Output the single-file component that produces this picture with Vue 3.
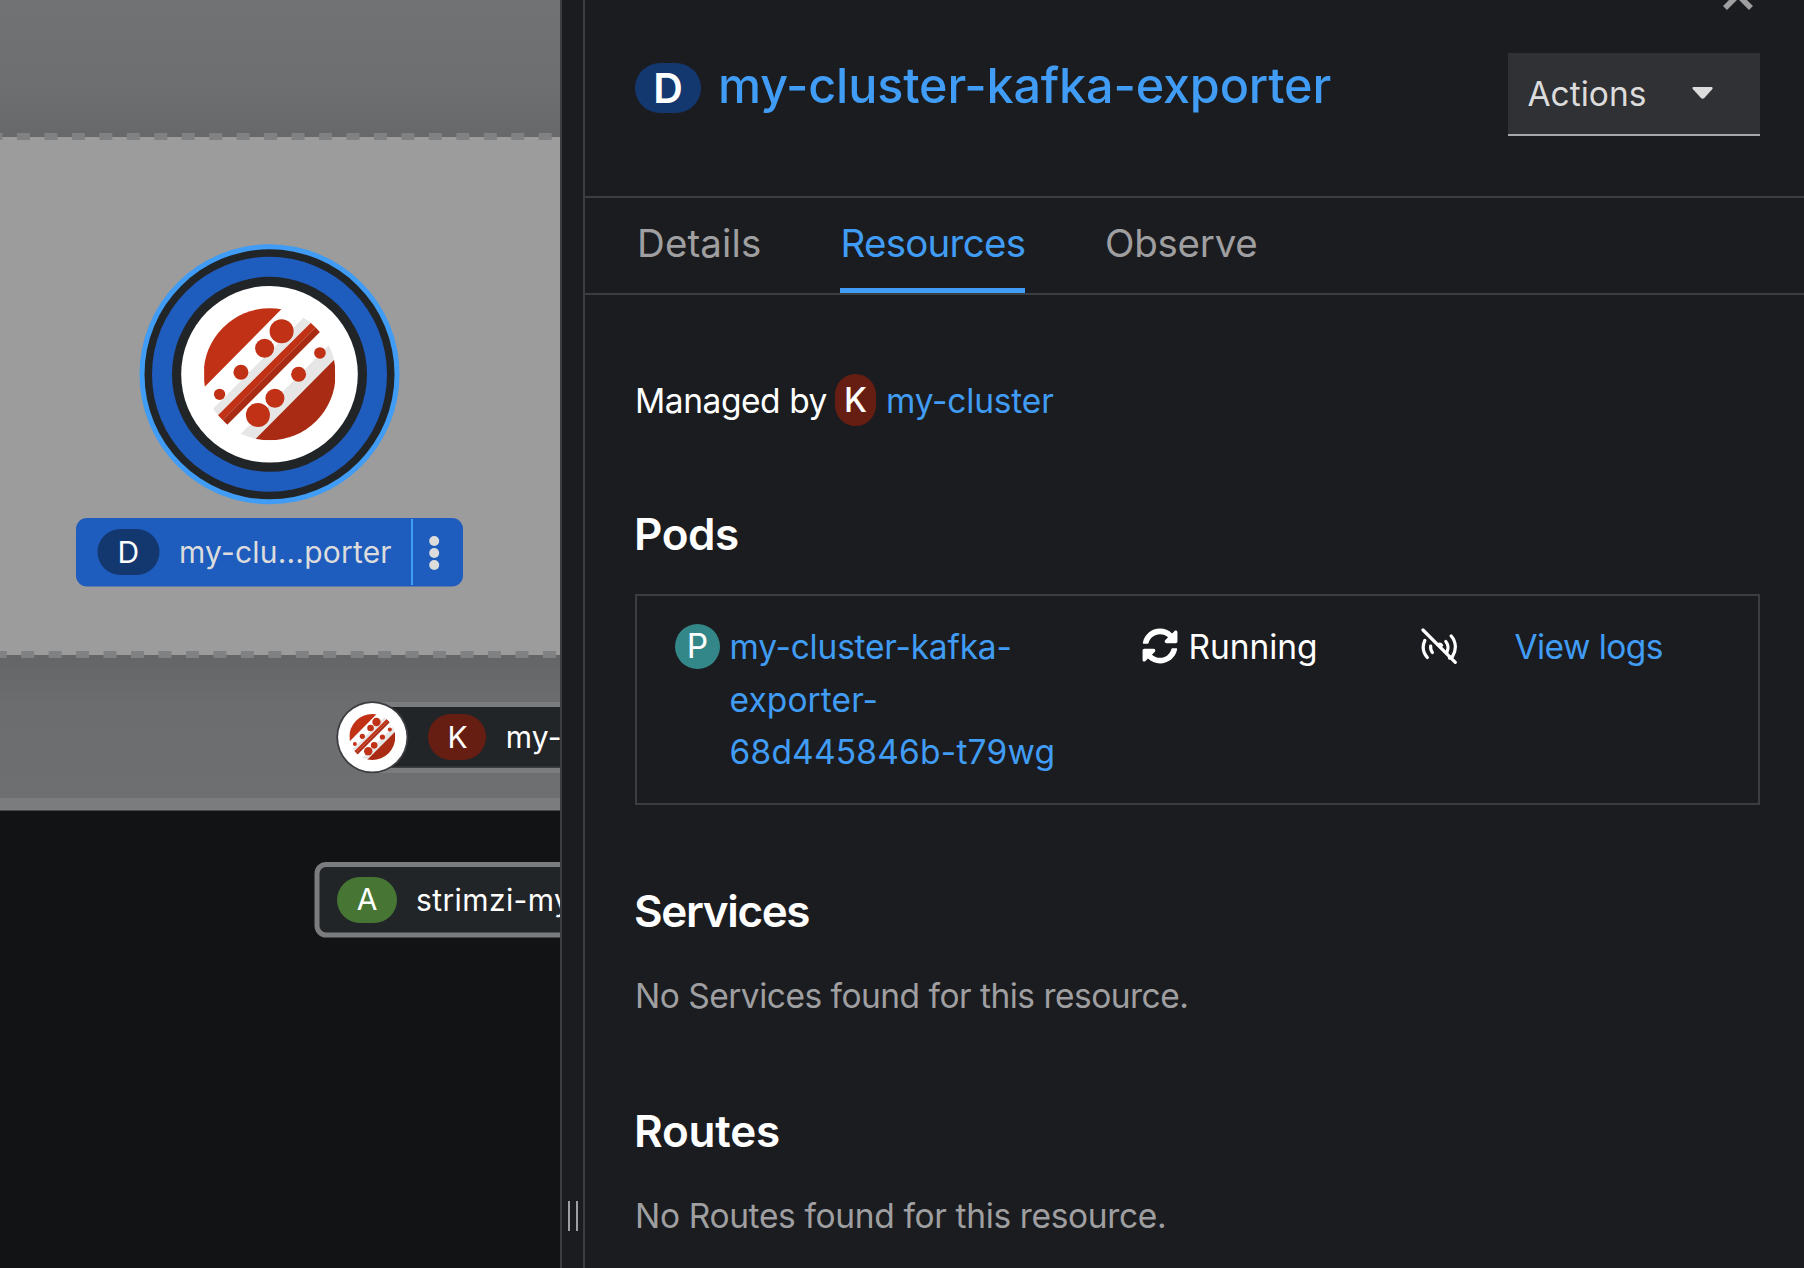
<script setup>
const tabs = [
  { label: 'Details', key: 'details' },
  { label: 'Resources', key: 'resources' },
  { label: 'Observe', key: 'observe' },
]
const active = 'resources'
</script>

<template>
  <div class="page">
    <svg class="canvas" width="560" height="1268" viewBox="0 0 560 1268">
      <defs>
        <linearGradient id="shadeTop" x1="0" y1="0" x2="0" y2="1">
          <stop offset="0" stop-color="#717274" />
          <stop offset="0.6" stop-color="#6e6f71" />
          <stop offset="1" stop-color="#67686a" />
        </linearGradient>
        <linearGradient id="shadeBottom" x1="0" y1="0" x2="0" y2="1">
          <stop offset="0" stop-color="#646567" />
          <stop offset="0.35" stop-color="#6c6d6f" />
          <stop offset="1" stop-color="#6e6f71" />
        </linearGradient>
        <clipPath id="logoClip"><circle r="198" /></clipPath>
        <symbol id="strimzi" viewBox="-198 -198 396 396">
          <g clip-path="url(#logoClip)">
            <rect x="-198" y="-198" width="396" height="396" fill="#fff" />
            <path d="M39-199L-196 39L-198-198Z" fill="#c13115" />
            <path d="M103-171L-171 105L-155 123L124-155Z" fill="#e6e6e6" />
            <path d="M124-155L138-141L-141 137L-155 123Z" fill="#c13115" />
            <path d="M138-141L151-127L-127 151L-141 137Z" fill="#aa2b13" />
            <path d="M184-94L-90 182L-60 212L212-60Z" fill="#e6e6e6" />
            <path d="M196-46L-46 198H198Z" fill="#aa2b13" />
          </g>
          <g fill="#c13115">
            <circle cx="36" cy="-129" r="36" /><circle cx="-15" cy="-78" r="28.5" />
            <circle cx="-86" cy="-6" r="22.5" /><circle cx="-150" cy="60" r="17" />
            <circle cx="151" cy="-64" r="17.5" /><circle cx="87" cy="0" r="22.5" />
            <circle cx="16" cy="72" r="28.5" /><circle cx="-35" cy="122" r="36" />
          </g>
        </symbol>
      </defs>

      <rect width="560" height="1268" fill="#121314" />
      <rect width="560" height="137" fill="url(#shadeTop)" />
      <rect y="655" width="560" height="143" fill="url(#shadeBottom)" />
      <rect y="798" width="560" height="12.500" fill="#7b7c7e" />
      <rect y="137" width="560" height="518" fill="#9c9c9c" />
      <path d="M-10.500 136.500H560M-6.300 654.500H560" stroke="#808183" stroke-width="7" stroke-dasharray="13 14.460" />

      <g>
        <circle cx="269.5" cy="374.3" r="130" fill="#409cf4" />
        <circle cx="269.5" cy="374.3" r="125" fill="#222528" />
        <circle cx="269.5" cy="374.3" r="117.5" fill="#1e5cbe" />
        <circle cx="269.5" cy="374.3" r="97.5" fill="#222528" />
        <circle cx="269.5" cy="374.3" r="88.3" fill="#fff" />
        <use href="#strimzi" x="203.6" y="308.3" width="132" height="132" />
        <rect x="76" y="518" width="387" height="68.500" rx="11" fill="#1e5cbe" />
        <rect x="97.500" y="529" width="62" height="46" rx="23" fill="#13386f" />
        <text x="128.3" y="562.500" class="lbl mid">D</text>
        <text x="179" y="563" class="lbl soft">my-clu...porter</text>
        <rect x="411" y="519" width="2" height="66" fill="#409cf4" />
        <g fill="#dcdcdc">
          <circle cx="434.2" cy="541" r="5" /><circle cx="434.2" cy="553" r="5" /><circle cx="434.2" cy="565" r="5" />
        </g>
      </g>

      <g>
        <rect x="374" y="702" width="200" height="71" fill="#7b7c7e" />
        <rect x="374" y="707" width="200" height="61" fill="#3c3d40" />
        <rect x="374" y="707" width="200" height="59.5" fill="#222528" />
        <circle cx="372.3" cy="737.3" r="36" fill="#3c3d40" />
        <circle cx="372.3" cy="737.3" r="34.2" fill="#fff" />
        <use href="#strimzi" x="349.3" y="714" width="46" height="46" />
        <rect x="428" y="714" width="58" height="46" rx="23" fill="#661d12" />
        <text x="457.5" y="748" class="lbl mid">K</text>
        <text x="505.8" y="748" class="lbl">my-</text>
      </g>

      <g>
        <rect x="317" y="864.5" width="300" height="70.5" rx="9" fill="#222528" stroke="#7b7c7e" stroke-width="5" />
        <rect x="337" y="877" width="60" height="46" rx="23" fill="#467534" />
        <text x="367" y="910" class="lbl mid">A</text>
        <text x="416" y="910.5" class="lbl wide">strimzi-my</text>
      </g>
    </svg>

    <div class="splitter"><span class="grip"></span></div>

    <section class="panel">
      <svg class="close" width="34" height="34" viewBox="0 0 34 34">
        <path d="M4 4L30 30M30 4L4 30" stroke="#9f9fa1" stroke-width="5.6" />
      </svg>
      <header class="head">
        <span class="badge big">D</span>
        <h1>my-cluster-kafka-exporter</h1>
        <button class="actions">
          Actions
          <svg width="22" height="13" viewBox="0 0 22 13"><path d="M1.500 0H19.500Q21.500 .4 20.200 2.300L12.300 11Q10.700 12.600 9 11L1 2.300Q-.4.4 1.500 0Z" fill="#dcdcdc" /></svg>
        </button>
      </header>
      <nav class="tabs">
        <a v-for="t in tabs" :key="t.key" :class="['tab', t.key, { on: t.key === active }]">{{ t.label }}</a>
      </nav>
      <div class="body">
        <p class="managed">
          <span class="by">Managed by</span><span class="badge k">K</span><a>my-cluster</a>
        </p>
        <h2 class="pods">Pods</h2>
        <div class="pod">
          <span class="badge p">P</span>
          <a class="name"><span>my-cluster-kafka-</span><span class="l2">exporter-</span><span class="l3">68d445846b-t79wg</span></a>
          <svg class="sync" width="36" height="36" viewBox="0 0 512 512"><path fill="#fff" d="M370.720 133.280C339.458 104.008 298.888 87.962 255.848 88c-77.458.068-144.328 53.178-162.791 126.850-1.344 5.363-6.122 9.150-11.651 9.150H24.103c-7.498 0-13.194-6.807-11.807-14.176C33.933 94.924 134.813 8 256 8c66.448 0 126.791 26.136 171.315 68.685L463.030 40.970C478.149 25.851 504 36.559 504 57.941V192c0 13.255-10.745 24-24 24H345.941c-21.382 0-32.090-25.851-16.971-40.971l41.750-41.749zM32 296h134.059c21.382 0 32.090 25.851 16.971 40.971l-41.750 41.750c31.262 29.273 71.835 45.319 114.876 45.280 77.418-.070 144.315-53.144 162.787-126.849 1.344-5.363 6.122-9.150 11.651-9.150h57.304c7.498 0 13.194 6.807 11.807 14.176C478.067 417.076 377.187 504 256 504c-66.448 0-126.791-26.136-171.315-68.685L48.970 471.030C33.851 486.149 8 475.441 8 454.059V320c0-13.255 10.745-24 24-24z" /></svg>
          <span class="run">Running</span>
          <svg class="rx" width="36" height="36" viewBox="0 0 36 36" fill="none" stroke="#fff" stroke-width="3.2" stroke-linecap="round">
            <path d="M2 2L34.300 34.300" />
            <path d="M3.800 12.500C1.300 18 2 24.500 6.300 29.500" />
            <path d="M9.700 18C9.400 20.500 10 22.800 11.400 24.500" />
            <path d="M17.500 16Q19.500 15 21 17.500" stroke-width="2.5" />
            <path d="M24.800 13.500C27.300 16.500 27.500 20.500 26 24" />
            <path d="M30.200 8C35.500 14 35.500 22.500 31.500 28.500L28.500 30" />
          </svg>
          <a class="logs">View logs</a>
        </div>
        <h2 class="services">Services</h2>
        <p class="none s">No Services found for this resource.</p>
        <h2 class="routes">Routes</h2>
        <p class="none r">No Routes found for this resource.</p>
      </div>
    </section>
  </div>
</template>

<style>
body { margin: 0; background: #1b1c1f; }
</style>

<style scoped>
.page {
  display: flex;
  width: 1804px;
  height: 1268px;
  overflow: hidden;
  background: #1b1c1f;
  color: #fff;
  font: 400 33.5px/52px Inter, "Liberation Sans", sans-serif;
}
.canvas { display: block; flex: none; }
.lbl { font-size: 30px; letter-spacing: 0.2px; fill: #fff; }
.mid { text-anchor: middle; letter-spacing: 0; }
.soft { fill: #dcdcdc; }
.wide { letter-spacing: 0.4px; }

.splitter {
  box-sizing: border-box;
  flex: none;
  display: flex;
  align-items: flex-end;
  width: 25px;
  padding: 0 0 37px 6px;
  border-left: 2px solid #3c3d40;
  border-right: 2px solid #3c3d40;
}
.grip {
  width: 6px;
  height: 30px;
  border: solid #9f9fa1;
  border-width: 0 2px;
}

.panel { position: relative; flex: 1; min-width: 0; }
.close { position: absolute; top: -22px; right: 49px; }
.head {
  box-sizing: border-box;
  display: flex;
  align-items: flex-start;
  height: 198px;
  padding: 53px 44px 0 50px;
  border-bottom: 2px solid #3c3d40;
}
.badge { flex: none; text-align: center; color: #fff; }
.big {
  width: 66px;
  height: 50px;
  margin-top: 10px;
  border-radius: 25px;
  background: #13386f;
  font-size: 41px;
  font-weight: 600;
  line-height: 50px;
}
h1 {
  margin: 3px 0 0 17px;
  color: #409cf4;
  font-size: 48.5px;
  font-weight: 500;
  line-height: 60px;
  letter-spacing: -0.15px;
}
.actions {
  box-sizing: border-box;
  display: flex;
  align-items: center;
  width: 252px;
  height: 83px;
  margin-left: auto;
  padding: 0 46px 0 19.5px;
  justify-content: space-between;
  border: 0;
  border-bottom: 2px solid #a8a8aa;
  background: #303134;
  color: #dcdcdc;
  font: inherit;
}

.tabs {
  box-sizing: border-box;
  display: flex;
  height: 97px;
  padding-left: 52px;
  border-bottom: 2px solid #3c3d40;
}
.tab {
  box-sizing: border-box;
  height: 95px;
  padding-top: 18.5px;
  border-bottom: 5px solid transparent;
  color: #9f9fa1;
  font-size: 38.5px;
  white-space: nowrap;
}
.details { width: 203px; letter-spacing: 0.1px; }
.resources { width: 185px; letter-spacing: -0.75px; text-indent: 0.5px; }
.observe { margin-left: 80px; letter-spacing: -0.25px; }
.tab.on { color: #409cf4; border-bottom-color: #409cf4; }

.body { padding: 80px 44px 0 50px; }
p, h2 { margin: 0; white-space: nowrap; }
a { color: #409cf4; }
.managed { display: flex; height: 52px; letter-spacing: -0.17px; }
.by { width: 200px; letter-spacing: -0.44px; }
.k {
  width: 41px;
  height: 52px;
  margin: -1px 10px 0 0;
  border-radius: 20.5px;
  background: #661d12;
  font-weight: 500;
  line-height: 53px;
}
h2 { font-size: 44px; font-weight: 600; line-height: 56px; }
.pods { margin-top: 79px; letter-spacing: -0.4px; text-indent: -1px; }
.services { margin-top: 78px; letter-spacing: -1.35px; text-indent: -1px; }
.routes { margin-top: 81px; letter-spacing: -0.2px; text-indent: -1px; }
.none { margin-top: 31px; color: #9f9fa1; }
.s { letter-spacing: -0.51px; }
.r { letter-spacing: -0.35px; }

.pod {
  box-sizing: border-box;
  display: flex;
  align-items: flex-start;
  height: 211px;
  margin-top: 32px;
  padding: 25px 0 0 38px;
  border: 2px solid #3c3d40;
}
.p {
  width: 45px;
  height: 45px;
  margin-top: 3px;
  border-radius: 50%;
  background: #348789;
  line-height: 45px;
}
.name {
  display: flex;
  flex-direction: column;
  width: 412px;
  margin-left: 9.5px;
  line-height: 52.5px;
  letter-spacing: -0.2px;
}
.l2 { letter-spacing: 0.1px; }
.l3 { letter-spacing: 0.2px; }
.sync { flex: none; margin-top: 6.5px; }
.run { width: 232.5px; margin-left: 11px; letter-spacing: -0.05px; }
.rx { flex: none; margin-top: 6.5px; }
.logs { margin-left: 57.5px; letter-spacing: -0.56px; white-space: nowrap; }
</style>
